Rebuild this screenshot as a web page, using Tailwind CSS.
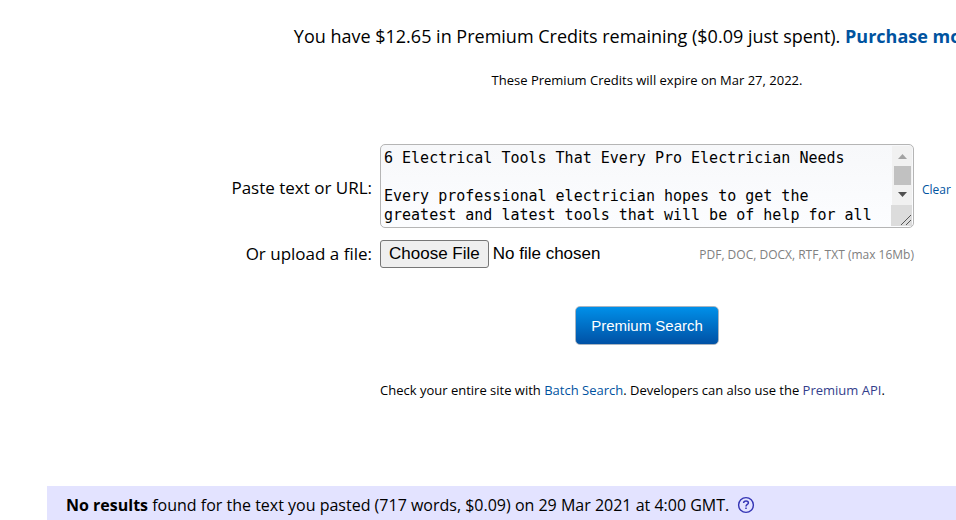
<!DOCTYPE html>
<html lang="en">
<head>
  <meta charset="UTF-8">
  <meta name="viewport" content="width=device-width, initial-scale=1.0">
  <title>Premium Search</title>
  <script src="https://cdn.jsdelivr.net/npm/@tailwindcss/browser@4"></script>
</head>
<body class="bg-white text-black font-['Open_Sans',sans-serif] overflow-hidden">

  <main class="ml-[47px] min-w-[1200px] pt-5">

    <!-- Credits -->
    <div class="text-center">
      <p class="pr-5 text-lg leading-8">You have $12.65 in Premium Credits remaining ($0.09 just spent). <a href="#" class="font-bold text-[#00539f]">Purchase more</a></p>
      <p class="mt-[18px] text-[13px] leading-5">These Premium Credits will expire on Mar 27, 2022.</p>
    </div>

    <!-- Search form -->
    <form class="mt-[54px]">
      <div class="grid grid-cols-[1fr_534px_1fr] items-center gap-x-2 gap-y-3">
        <label for="text" class="pt-1 text-right text-[17px] leading-6">Paste text or URL:</label>
        <div class="relative">
          <textarea id="text" class="block h-[84px] w-full resize-none overflow-hidden rounded-[5px] border border-[#b5b5b5] bg-linear-to-b from-[#f7f8fa] to-[#fcfdff] py-1 pl-[3px] pr-6 font-['DejaVu_Sans_Mono',monospace] text-[15px] leading-[19px]">6 Electrical Tools That Every Pro Electrician Needs

Every professional electrician hopes to get the
greatest and latest tools that will be of help for all
their electrical jobs.</textarea>
          <!-- scrollbar and resize grip -->
          <svg class="absolute right-[2px] top-[2px]" width="21" height="80" viewBox="0 0 21 80" aria-hidden="true">
            <path fill="#f1f1f1" d="M1 0h20v59H1z"/>
            <path fill="#a3a3a3" d="M7 13h9l-4.500-5z"/>
            <path fill="#c1c1c1" d="M3 20h17v19H3z"/>
            <path fill="#505050" d="M7 46h9l-4.500 5z"/>
            <path fill="#dcdcdc" d="M0 59h21v21H0z"/>
            <path fill="none" stroke="#555" d="M10 79l10-10M15 79l5-5"/>
          </svg>
        </div>
        <a href="#" class="pt-2 text-[12px] leading-5 text-[#00539f]">Clear</a>

        <label for="file" class="text-right text-[17px] leading-6">Or upload a file:</label>
        <div class="flex items-center justify-between">
          <input id="file" type="file" class="w-[260px] font-['Liberation_Sans',sans-serif] text-[17px] leading-6 file:mr-1 file:h-7 file:rounded-[3px] file:border file:border-[#767676] file:bg-[#efefef] file:px-2">
          <span class="pt-0.5 text-[12px] leading-5 text-[#808080]">PDF, DOC, DOCX, RTF, TXT (max 16Mb)</span>
        </div>
      </div>

      <div class="mt-[38px] text-center">
        <button type="submit" class="h-[39px] rounded-[5px] border border-[#a9b4c0] bg-linear-to-b from-[#0090e9] to-[#0051a5] px-[15px] pt-0.5 font-['Liberation_Sans',sans-serif] text-[15px] text-white">Premium Search</button>
      </div>
    </form>

    <p class="mt-[35px] px-[333px] text-[13px] leading-5">Check your entire site with <a href="#" class="text-[#00539f]">Batch Search</a>. Developers can also use the <a href="#" class="text-[#333e8c]">Premium API</a>.</p>

    <!-- Results -->
    <div class="mt-[86px] flex items-center gap-2 bg-[#e3e3ff] px-[19px] pt-[7px] pb-1">
      <p class="text-base leading-6"><b>No results</b> found for the text you pasted (717 words, $0.09) on 29 Mar 2021 at 4:00 GMT.</p>
      <a href="#" aria-label="Help">
        <svg width="18" height="18" viewBox="0 0 18 18" fill="none" stroke="#3535b5">
          <circle cx="9" cy="9" r="7.4" stroke-width="1.4"/>
          <path stroke-width="1.5" d="M6.600 7c.1-1.300 1-2 2.400-2s2.400.7 2.400 1.900c0 1.600-2.400 1.600-2.400 3.600M9 11.600v1.500"/>
        </svg>
      </a>
    </div>
  </main>

</body>
</html>
